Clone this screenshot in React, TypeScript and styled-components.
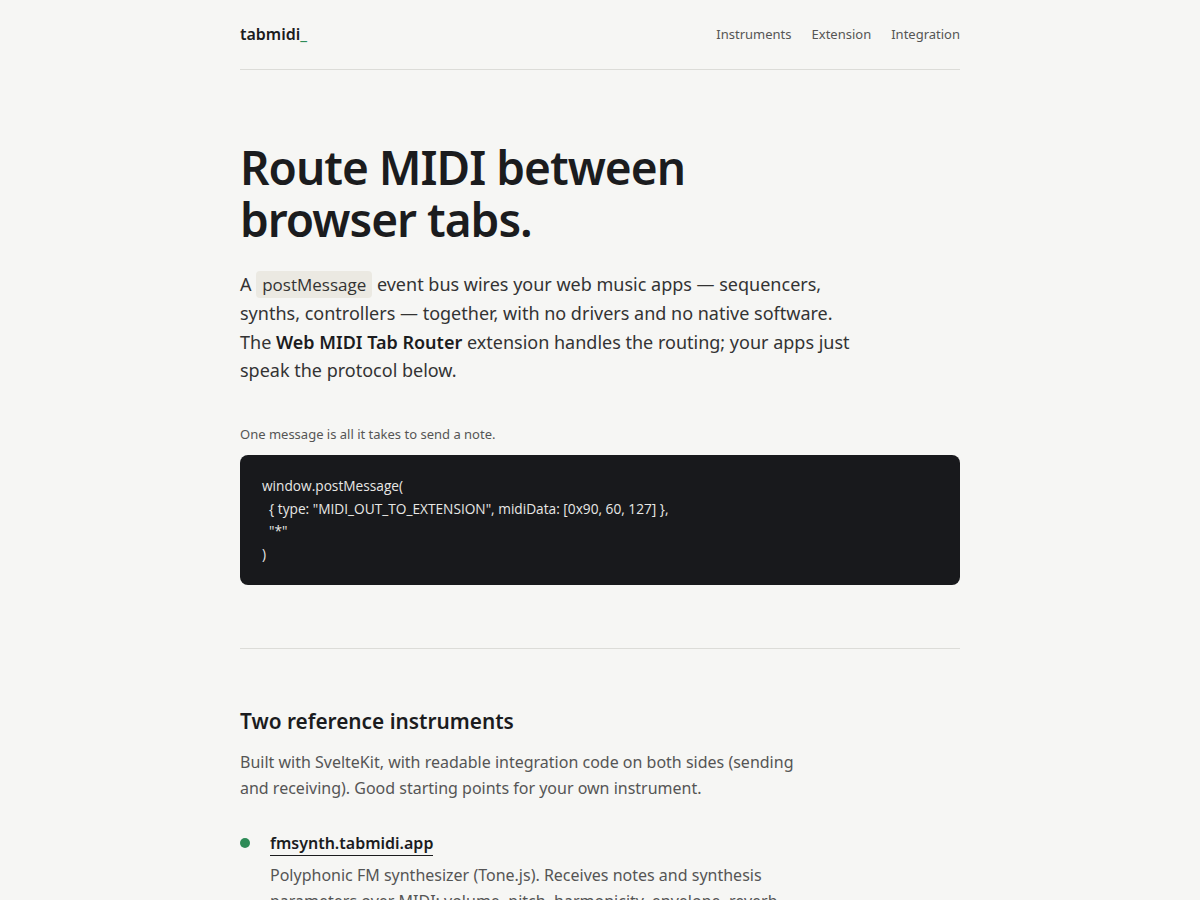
import styled, { createGlobalStyle } from "styled-components";

const GlobalStyle = createGlobalStyle`
  html, body {
    margin: 0;
    padding: 0;
    background: #f6f6f4;
    color: #1b1c1e;
    font-family: "Noto Sans", "Open Sans", sans-serif;
  }
`;

const Page = styled.div`
  width: 720px;
  margin: 0 auto;
`;

const Header = styled.header`
  display: flex;
  align-items: center;
  justify-content: space-between;
  height: 70px;
  padding-bottom: 2px;
  box-sizing: border-box;
  border-bottom: 1px solid #dcdcd8;
`;

const Logo = styled.a`
  font-size: 16px;
  font-weight: 600;
  color: #1b1c1e;
  text-decoration: none;
  span {
    color: #2e8b57;
  }
`;

const Nav = styled.nav`
  display: flex;
  gap: 20px;
`;

const NavLink = styled.a`
  font-size: 13px;
  color: #555;
  text-decoration: none;
`;

const Hero = styled.section`
  padding: 71px 0 63px;
  border-bottom: 1px solid #dcdcd8;
`;

const Title = styled.h1`
  margin: 0 0 25px;
  font-size: 46px;
  line-height: 52px;
  font-weight: 600;
  letter-spacing: -1px;
  max-width: 520px;
`;

const Lead = styled.p`
  margin: 0 0 40px;
  font-size: 18px;
  line-height: 28.8px;
  color: #333;
  max-width: 620px;
  strong {
    font-weight: 600;
    color: #1b1c1e;
  }
`;

const InlineCode = styled.code`
  font-family: "Open Sans", "Noto Sans", sans-serif;
  font-size: 17px;
  line-height: 1;
  background: #ebe9e2;
  border-radius: 4px;
  padding: 2px 6px;
`;

const Caption = styled.p`
  margin: 0 0 12px;
  font-size: 13px;
  color: #555;
`;

const CodeBlock = styled.pre`
  margin: 0;
  background: #18191c;
  color: #e8e8e6;
  border-radius: 8px;
  padding: 20px 22px;
  font-family: "Open Sans", "Noto Sans", sans-serif;
  font-size: 13.7px;
  line-height: 22.5px;
  white-space: pre;
`;

const Section = styled.section`
  padding: 58px 0 0;
`;

const SectionTitle = styled.h2`
  margin: 0 0 14px;
  font-size: 20.8px;
  font-weight: 600;
  line-height: 28px;
`;

const SectionText = styled.p`
  margin: 0 0 30px;
  font-size: 16px;
  line-height: 26px;
  color: #555;
  max-width: 560px;
`;

const List = styled.ul`
  list-style: none;
  margin: 0;
  padding: 0;
`;

const Item = styled.li`
  display: grid;
  grid-template-columns: 30px 1fr;
  align-items: start;
`;

const Dot = styled.span<{ $color: string }>`
  width: 10px;
  height: 10px;
  border-radius: 50%;
  background: ${(p) => p.$color};
  margin: 7px 0 0 0;
`;

const ItemLink = styled.a`
  display: inline-block;
  font-size: 16px;
  font-weight: 600;
  color: #1b1c1e;
  text-decoration: none;
  border-bottom: 1px solid #1b1c1e;
  line-height: 24px;
`;

const ItemText = styled.p`
  margin: 6px 0 0;
  font-size: 16px;
  line-height: 26px;
  color: #555;
  max-width: 520px;
`;

export default function App() {
  return (
    <>
      <GlobalStyle />
      <Page>
        <Header>
          <Logo href="#">
            tabmidi<span>_</span>
          </Logo>
          <Nav>
            <NavLink href="#">Instruments</NavLink>
            <NavLink href="#">Extension</NavLink>
            <NavLink href="#">Integration</NavLink>
          </Nav>
        </Header>
        <Hero>
          <Title>Route MIDI between browser tabs.</Title>
          <Lead>
            A <InlineCode>postMessage</InlineCode> event bus wires your web music apps — sequencers,
            synths, controllers — together, with no drivers and no native software. The{" "}
            <strong>Web MIDI Tab Router</strong> extension handles the routing; your apps just speak
            the protocol below.
          </Lead>
          <Caption>One message is all it takes to send a note.</Caption>
          <CodeBlock>{`window.postMessage(
  { type: "MIDI_OUT_TO_EXTENSION", midiData: [0x90, 60, 127] },
  "*"
)`}</CodeBlock>
        </Hero>
        <Section>
          <SectionTitle>Two reference instruments</SectionTitle>
          <SectionText>
            Built with SvelteKit, with readable integration code on both sides (sending and
            receiving). Good starting points for your own instrument.
          </SectionText>
          <List>
            <Item>
              <Dot $color="#2e8b57" />
              <div>
                <ItemLink href="#">fmsynth.tabmidi.app</ItemLink>
                <ItemText>
                  Polyphonic FM synthesizer (Tone.js). Receives notes and synthesis parameters over
                  MIDI: volume, pitch, harmonicity, envelope, reverb and delay.
                </ItemText>
              </div>
            </Item>
          </List>
        </Section>
      </Page>
    </>
  );
}
